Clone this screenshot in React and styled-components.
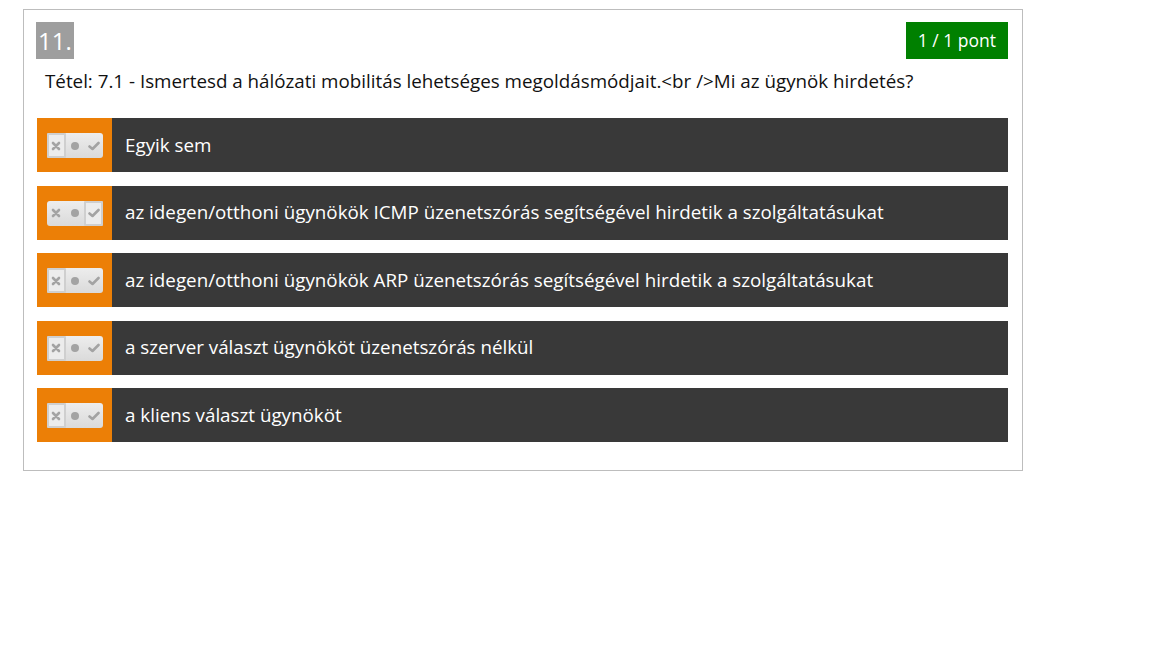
import styled, { createGlobalStyle } from 'styled-components';

const GlobalStyle = createGlobalStyle`
  body {
    margin: 0;
    background: #fff;
    font-family: "Open Sans", "Liberation Sans", sans-serif;
  }
`;

const Page = styled.div`
  padding: 9px 0 0 23px;
`;

const QuestionBox = styled.div`
  box-sizing: border-box;
  width: 1000px;
  border: 1px solid #bdbdbd;
  padding: 12px 14px 28px 12px;
`;

const Header = styled.div`
  display: flex;
  justify-content: space-between;
  align-items: flex-start;
`;

const Number = styled.div`
  background: #9e9e9e;
  color: #fff;
  font-size: 24px;
  height: 37px;
  line-height: 37px;
  padding: 0 2px;
`;

const Score = styled.div`
  background: #008000;
  color: #fff;
  font-size: 17.5px;
  height: 37px;
  line-height: 37px;
  padding: 0 12px;
`;

const QuestionText = styled.div`
  font-size: 18.8px;
  color: #111;
  margin: 10px 0 0 9px;
  line-height: 24px;
`;

const Answers = styled.div`
  display: flex;
  flex-direction: column;
  gap: 13.5px;
  margin: 25px 0 0 1px;
`;

const Row = styled.div`
  display: flex;
  height: 54px;
  background: #393939;
`;

const Side = styled.div`
  width: 75px;
  flex: none;
  background: #ec7f06;
  display: flex;
  align-items: center;
  padding-left: 10px;
  box-sizing: border-box;
`;

const Toggle = styled.div`
  display: flex;
  width: 56px;
  height: 25px;
  border-radius: 3px;
  background: linear-gradient(#ededed, #dadada);
  margin-top: 1px;
`;

const Segment = styled.div`
  flex: 1;
  display: flex;
  align-items: center;
  justify-content: center;
  box-sizing: border-box;
  border: 2px solid ${p => (p.$active ? '#cfcfcf' : 'transparent')};
  background: ${p => (p.$active ? '#ececec' : 'transparent')};
  border-radius: 1px;
`;

const Label = styled.div`
  color: #fff;
  font-size: 18.8px;
  display: flex;
  align-items: center;
  padding-left: 13px;
  padding-bottom: 1px;
`;

const Cross = () => (
  <svg width="10" height="10" viewBox="0 0 10 10">
    <path d="M2 2 L8 8 M8 2 L2 8" stroke="#a3a3a3" strokeWidth="2.6" strokeLinecap="round" />
  </svg>
);

const Dot = () => (
  <svg width="10" height="10" viewBox="0 0 10 10">
    <circle cx="5" cy="5" r="4" fill="#a3a3a3" />
  </svg>
);

const Check = () => (
  <svg width="12" height="10" viewBox="0 0 12 10">
    <path d="M1.5 5.5 L4.5 8 L10.5 2" fill="none" stroke="#a3a3a3" strokeWidth="2.6" strokeLinecap="round" strokeLinejoin="round" />
  </svg>
);

const answers = [
  { text: 'Egyik sem', state: 'no' },
  { text: 'az idegen/otthoni ügynökök ICMP üzenetszórás segítségével hirdetik a szolgáltatásukat', state: 'yes' },
  { text: 'az idegen/otthoni ügynökök ARP üzenetszórás segítségével hirdetik a szolgáltatásukat', state: 'no' },
  { text: 'a szerver választ ügynököt üzenetszórás nélkül', state: 'no' },
  { text: 'a kliens választ ügynököt', state: 'no' },
];

export default function App() {
  return (
    <>
      <GlobalStyle />
      <Page>
        <QuestionBox>
          <Header>
            <Number>11.</Number>
            <Score>1 / 1 pont</Score>
          </Header>
          <QuestionText>
            Tétel: 7.1 - Ismertesd a hálózati mobilitás lehetséges megoldásmódjait.&lt;br /&gt;Mi az ügynök hirdetés?
          </QuestionText>
          <Answers>
            {answers.map(a => (
              <Row key={a.text}>
                <Side>
                  <Toggle>
                    <Segment $active={a.state === 'no'}><Cross /></Segment>
                    <Segment $active={a.state === 'none'}><Dot /></Segment>
                    <Segment $active={a.state === 'yes'}><Check /></Segment>
                  </Toggle>
                </Side>
                <Label>{a.text}</Label>
              </Row>
            ))}
          </Answers>
        </QuestionBox>
      </Page>
    </>
  );
}
